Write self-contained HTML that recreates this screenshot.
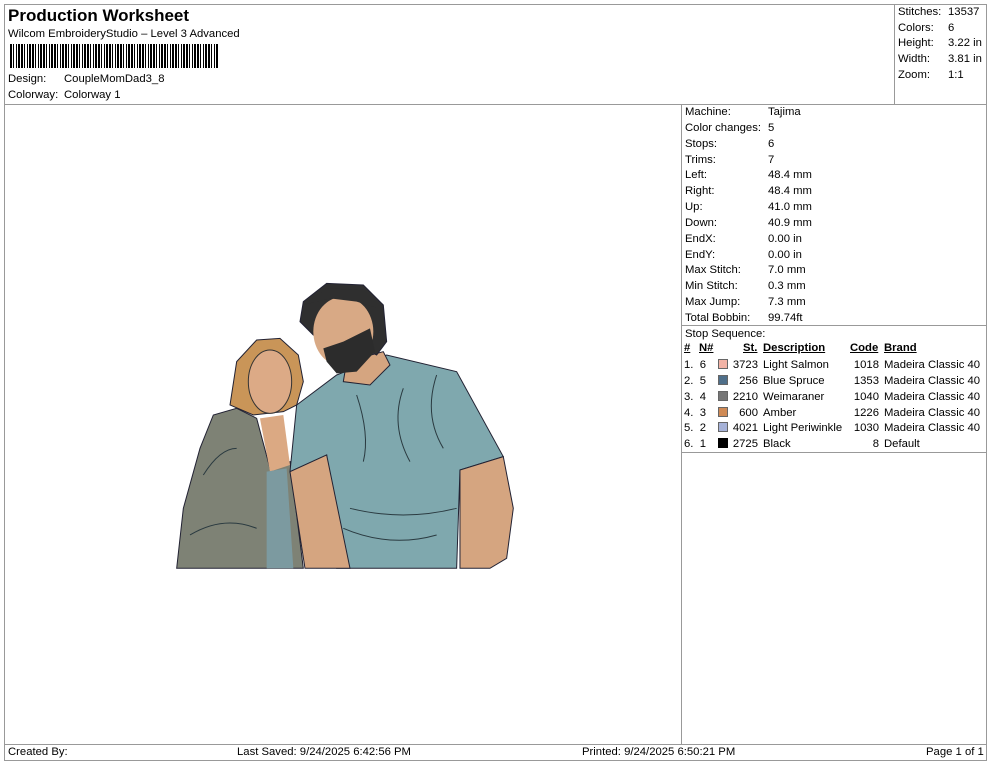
<!DOCTYPE html>
<html><head><meta charset="utf-8"><style>
*{margin:0;padding:0;box-sizing:border-box}
body{width:990px;height:762px;background:#fff;font-family:"Liberation Sans",Arial,sans-serif;font-size:11.3px;color:#000;position:relative;overflow:hidden}
.a{position:absolute;white-space:nowrap}
.ln{position:absolute;background:#999}
.sw{display:inline-block;width:10px;height:10px;border:1px solid #666;vertical-align:-1px}
</style></head><body>
<div class="ln" style="left:4px;top:4px;width:983px;height:1px"></div>
<div class="ln" style="left:4px;top:760px;width:983px;height:1px"></div>
<div class="ln" style="left:4px;top:4px;width:1px;height:757px"></div>
<div class="ln" style="left:986px;top:4px;width:1px;height:757px"></div>
<div class="ln" style="left:4px;top:104px;width:983px;height:1px"></div>
<div class="ln" style="left:894px;top:4px;width:1px;height:100px"></div>
<div class="ln" style="left:681px;top:104px;width:1px;height:640px"></div>
<div class="ln" style="left:4px;top:744px;width:983px;height:1px"></div>
<div class="ln" style="left:681px;top:325px;width:306px;height:1px"></div>
<div class="ln" style="left:681px;top:452px;width:306px;height:1px"></div>

<div class="a" style="left:8px;top:6px;font-size:17px;font-weight:bold">Production Worksheet</div>
<div class="a" style="left:8px;top:28px">Wilcom EmbroideryStudio – Level 3 Advanced</div>
<div class="a" style="left:10px;top:44px;width:208px;height:24px;background:repeating-linear-gradient(90deg,#000 0 2px,#fff 2px 3px,#000 3px 4px,#fff 4px 6px,#000 6px 7px,#fff 7px 8px,#000 8px 10px,#fff 10px 11px)"></div>
<div class="a" style="left:8px;top:73px">Design:</div><div class="a" style="left:64px;top:73px">CoupleMomDad3_8</div>
<div class="a" style="left:8px;top:89px">Colorway:</div><div class="a" style="left:64px;top:89px">Colorway 1</div>

<div class="a" style="left:898px;top:5px;line-height:15.7px">Stitches:<br>Colors:<br>Height:<br>Width:<br>Zoom:</div>
<div class="a" style="left:948px;top:5px;line-height:15.7px">13537<br>6<br>3.22 in<br>3.81 in<br>1:1</div>

<div class="a" style="left:685px;top:105px;line-height:15.85px">Machine:<br>Color changes:<br>Stops:<br>Trims:<br>Left:<br>Right:<br>Up:<br>Down:<br>EndX:<br>EndY:<br>Max Stitch:<br>Min Stitch:<br>Max Jump:<br>Total Bobbin:<br>Stop Sequence:</div>
<div class="a" style="left:768px;top:105px;line-height:15.85px">Tajima<br>5<br>6<br>7<br>48.4 mm<br>48.4 mm<br>41.0 mm<br>40.9 mm<br>0.00 in<br>0.00 in<br>7.0 mm<br>0.3 mm<br>7.3 mm<br>99.74ft</div>

<div class="a" style="left:684px;top:342px;font-weight:bold;text-decoration:underline">#</div>
<div class="a" style="left:699px;top:342px;font-weight:bold;text-decoration:underline">N#</div>
<div class="a" style="left:743px;top:342px;font-weight:bold;text-decoration:underline">St.</div>
<div class="a" style="left:763px;top:342px;font-weight:bold;text-decoration:underline">Description</div>
<div class="a" style="left:850px;top:342px;font-weight:bold;text-decoration:underline">Code</div>
<div class="a" style="left:884px;top:342px;font-weight:bold;text-decoration:underline">Brand</div>
<div class="a" style="left:684px;top:358px;line-height:15.85px">1.&nbsp; 6<br>2.&nbsp; 5<br>3.&nbsp; 4<br>4.&nbsp; 3<br>5.&nbsp; 2<br>6.&nbsp; 1</div>
<div class="a" style="left:718px;top:358px;line-height:15.85px">
<span class="sw" style="background:#f2b3a6"></span><br><span class="sw" style="background:#4f6f8a"></span><br><span class="sw" style="background:#767676"></span><br><span class="sw" style="background:#cf8a55"></span><br><span class="sw" style="background:#a6b2d8"></span><br><span class="sw" style="background:#000;border-color:#000"></span></div>
<div class="a" style="left:724px;top:358px;width:34px;text-align:right;line-height:15.85px">3723<br>256<br>2210<br>600<br>4021<br>2725</div>
<div class="a" style="left:763px;top:358px;line-height:15.85px">Light Salmon<br>Blue Spruce<br>Weimaraner<br>Amber<br>Light Periwinkle<br>Black</div>
<div class="a" style="left:844px;top:358px;width:35px;text-align:right;line-height:15.85px">1018<br>1353<br>1040<br>1226<br>1030<br>8</div>
<div class="a" style="left:884px;top:358px;line-height:15.85px">Madeira Classic 40<br>Madeira Classic 40<br>Madeira Classic 40<br>Madeira Classic 40<br>Madeira Classic 40<br>Default</div>

<svg class="a" style="left:0;top:0" width="990" height="762">
<g transform="translate(170,275) scale(0.3333)" stroke="#223" stroke-width="3">
<path d="M20 880 L40 700 L90 520 L130 420 L200 400 L260 430 L300 580 L360 560 L400 880 Z" fill="#7e8275"/>
<path d="M270 430 L340 420 L360 570 L300 590 Z" fill="#dba983" stroke="none"/>
<path d="M290 590 L350 580 L370 880 L290 880 Z" fill="#7c9aa0" stroke="none"/>
<path d="M180 390 L200 260 L260 195 L330 190 L385 240 L400 320 L380 390 L340 410 L250 420 Z" fill="#c99558"/>
<ellipse cx="300" cy="320" rx="65" ry="95" fill="#dcaa86" stroke="#333"/>
<path d="M500 300 L650 240 L860 290 L1000 545 L870 585 L860 880 L500 880 L470 540 L360 590 L380 390 Z" fill="#7fa8ae"/>
<path d="M870 585 L1000 545 L1030 700 L1010 850 L960 880 L870 880 Z" fill="#d5a580"/>
<path d="M360 590 L470 540 L540 880 L405 880 Z" fill="#d5a580"/>
<path d="M530 260 L640 230 L660 270 L600 330 L520 320 Z" fill="#d5a580"/>
<path d="M400 80 L470 25 L580 30 L640 90 L650 200 L620 240 L560 210 L430 180 L390 140 Z" fill="#2f2f2f"/>
<ellipse cx="520" cy="170" rx="90" ry="105" fill="#d8a985" stroke="none"/>
<path d="M400 90 L470 40 L580 45 L625 100 L560 80 L480 70 Z" fill="#2f2f2f" stroke="none"/>
<path d="M460 220 L520 200 L600 160 L615 230 L560 290 L500 295 L470 260 Z" fill="#2c2c2c" stroke="none"/>
<g fill="none" stroke="#2a3a40" stroke-width="3">
<path d="M560 360 Q600 480 580 560"/><path d="M700 340 Q660 450 720 560"/><path d="M800 300 Q760 420 820 520"/>
<path d="M540 700 Q700 740 860 700"/><path d="M520 760 Q660 820 800 780"/><path d="M100 600 Q150 520 200 520"/><path d="M60 780 Q160 720 260 760"/>
</g>
</g>
</svg>

<div class="a" style="left:8px;top:746px">Created By:</div>
<div class="a" style="left:237px;top:746px">Last Saved: 9/24/2025 6:42:56 PM</div>
<div class="a" style="left:582px;top:746px">Printed: 9/24/2025 6:50:21 PM</div>
<div class="a" style="left:926px;top:746px">Page 1 of 1</div>
</body></html>
